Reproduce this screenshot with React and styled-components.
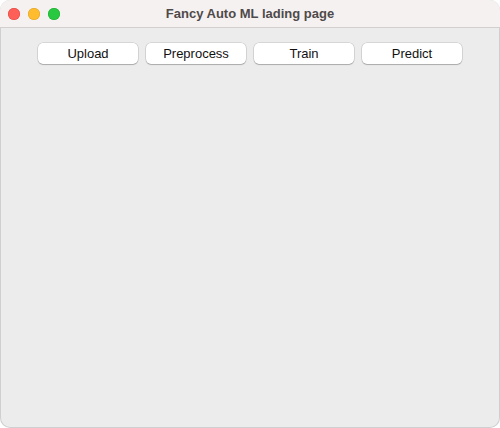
import React from "react";
import styled, { createGlobalStyle } from "styled-components";

const Global = createGlobalStyle`
  html, body { margin: 0; padding: 0; background: #ffffff; }
  body { font-family: "Liberation Sans", Arial, sans-serif; }
`;

const Window = styled.div`
  width: 500px;
  height: 428px;
  box-sizing: border-box;
  border-radius: 10px;
  overflow: hidden;
  background: #ececec;
  display: flex;
  flex-direction: column;
  box-shadow: inset 0 0 0 1px rgba(0,0,0,0.12);
`;

const TitleBar = styled.div`
  height: 28px;
  flex: 0 0 28px;
  background: #f6f1f1;
  border-bottom: 1px solid #d3cfcf;
  box-sizing: border-box;
  display: grid;
  grid-template-columns: 1fr auto 1fr;
  align-items: center;
  padding: 0 8px;
`;

const Lights = styled.div`
  display: flex;
  gap: 8px;
  align-items: center;
`;

const Light = styled.span`
  width: 12px;
  height: 12px;
  border-radius: 50%;
  background: ${(p) => p.$c};
  box-shadow: inset 0 0 0 0.5px ${(p) => p.$b};
`;

const Title = styled.div`
  font-size: 13px;
  font-weight: bold;
  color: #4e4a4a;
  text-align: center;
`;

const Content = styled.div`
  flex: 1;
  display: flex;
  justify-content: center;
  align-items: flex-start;
  padding-top: 15px;
  gap: 8px;
`;

const Button = styled.button`
  width: 100px;
  height: 21px;
  border: none;
  border-radius: 5px;
  background: #ffffff;
  box-shadow: 0 0 0 0.5px rgba(0,0,0,0.18), 0 1px 1px rgba(0,0,0,0.2);
  font-family: "Liberation Sans", Arial, sans-serif;
  font-size: 13px;
  color: #111;
  padding: 0;
  cursor: default;
`;

export default function App() {
  return (
    <>
      <Global />
      <Window>
        <TitleBar>
          <Lights>
            <Light $c="#fe5f57" $b="#e0443e" />
            <Light $c="#febc2e" $b="#dea123" />
            <Light $c="#28c840" $b="#1aab29" />
          </Lights>
          <Title>Fancy Auto ML lading page</Title>
          <div />
        </TitleBar>
        <Content>
          <Button>Upload</Button>
          <Button>Preprocess</Button>
          <Button>Train</Button>
          <Button>Predict</Button>
        </Content>
      </Window>
    </>
  );
}
